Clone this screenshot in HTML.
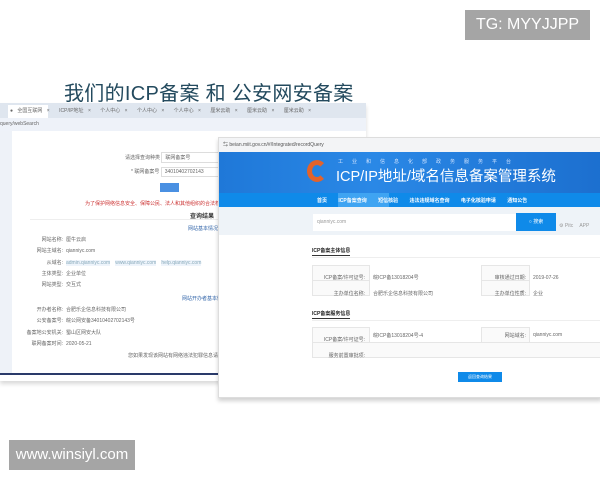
<!DOCTYPE html>
<html><head><meta charset="utf-8"><style>
*{margin:0;padding:0;box-sizing:border-box}
body{width:600px;height:480px;background:#fff;position:relative;overflow:hidden;font-family:"Liberation Sans","Noto Sans CJK SC",sans-serif}
.a{position:absolute}
.t{font-size:5px;color:#666;white-space:nowrap}
</style></head><body>
<div class="a" style="left:465px;top:10px;width:125px;height:30px;background:#a5a5a5;color:#fff;font-size:16px;line-height:30px;text-align:center">TG: MYYJJPP</div>
<div class="a" style="left:64px;top:77px;font-size:20px;color:#234a5e;white-space:nowrap;letter-spacing:0.3px">我们的ICP备案 和 公安网安备案</div>

<!-- left window -->
<div class="a" style="left:0;top:103px;width:366px;height:278px;background:#fff;box-shadow:0 3px 4px rgba(0,0,0,.15)">
 <div class="a" style="left:0;top:0;width:366px;height:15px;background:#dfe6ef"></div>
 <div class="a" style="left:8px;top:2px;width:40px;height:13px;background:#fff"></div>
 <div class="a t" style="left:10px;top:4px;word-spacing:3px">● 全国互联网 ×　 ICP/IP地址 ×　 个人中心 ×　 个人中心 ×　 个人中心 ×　 厘米云助 ×　 厘米云助 ×　 厘米云助 ×</div>
 <div class="a" style="left:0;top:15px;width:366px;height:13px;background:#eef2f9"></div>
 <div class="a t" style="left:0;top:18px">query/webSearch</div>
 <div class="a" style="left:0;top:28px;width:12px;height:242px;background:#eef2f8"></div>
 <div class="a t" style="left:125px;top:49px">请选择查询种类 <span style="display:inline-block;width:60px;border:1px solid #ddd;padding:1px 3px">联网备案号</span></div>
 <div class="a t" style="left:131px;top:64px">* 联网备案号 <span style="display:inline-block;width:60px;border:1px solid #ddd;padding:1px 3px">34010402702143</span></div>
 <div class="a" style="left:160px;top:80px;width:19px;height:9px;background:#4a90e2"></div>
 <div class="a t" style="left:85px;top:97px;color:#c33">为了保护网络信息安全、保障公民、法人和其他组织的合法权益，维护国家安全</div>
 <div class="a" style="left:30px;top:116px;width:336px;height:1px;background:#eee"></div>
 <div class="a" style="left:190px;top:108px;font-size:6px;color:#333;font-weight:bold">查询结果</div>
 <div class="a t" style="left:188px;top:122px;color:#3366aa">网站基本情况</div>
 <div class="a t" style="left:18px;top:132px;line-height:11.3px;text-align:right;width:45px">网站名称:<br>网站主域名:<br>从域名:<br>主体类型:<br>网站类型:</div>
 <div class="a t" style="left:66px;top:132px;line-height:11.3px">厘牛云启<br>qianniyc.com<br><span style="background:#eef4fb;color:#8ab">admin.qianniyc.com</span>　<span style="background:#eef4fb;color:#8ab">www.qianniyc.com</span>　<span style="background:#eef4fb;color:#8ab">help.qianniyc.com</span><br>企业单位<br>交互式</div>
 <div class="a t" style="left:182px;top:192px;color:#3366aa">网站开办者基本情况</div>
 <div class="a t" style="left:13px;top:202px;line-height:11.3px;text-align:right;width:50px">开办者名称:<br>公安备案号:<br>备案地公安机关:<br>联网备案时间:</div>
 <div class="a t" style="left:66px;top:202px;line-height:11.3px">合肥乐企信息科技有限公司<br>皖公网安备34010402702143号<br>蜀山区网安大队<br>2020-05-21</div>
 <div class="a t" style="left:128px;top:249px">您如果发现该网站有网络违法犯罪信息请及时报告</div>
 <div class="a" style="left:0;top:270px;width:366px;height:2px;background:#2a3a6a"></div>
</div>

<!-- right window -->
<div class="a" style="left:218px;top:137px;width:384px;height:261px;background:#fff;border:1px solid #ddd;box-shadow:0 3px 4px rgba(0,0,0,.18)">
 <div class="a" style="left:0;top:0;width:384px;height:14px;background:#f3f4f6"></div>
 <div class="a t" style="left:4px;top:3px;color:#555">⇆ beian.miit.gov.cn/#/Integrated/recordQuery</div>
 <div class="a" style="left:0;top:14px;width:384px;height:41px;background:linear-gradient(90deg,#1f78d8,#2a88e6 40%,#1c6fcf)"></div>
 <div class="a" style="left:88px;top:22px;width:20px;height:22px;border-radius:50%;border:5px solid #e2632c;border-right-color:transparent"></div>
 <div class="a" style="left:119px;top:20px;font-size:5px;color:#cfe3ff;letter-spacing:9px;white-space:nowrap">工业和信息化部政务服务平台</div>
 <div class="a" style="left:117px;top:27px;font-size:14.5px;color:#fff;white-space:nowrap">ICP/IP地址/域名信息备案管理系统</div>
 <div class="a" style="left:0;top:55px;width:384px;height:14px;background:#0f8ae9"></div>
 <div class="a" style="left:119px;top:55px;width:51px;height:14px;background:#3fa4f2"></div>
 <div class="a t" style="left:98px;top:59px;color:#fff;font-weight:bold">首页　　 ICP备案查询　　 短信核验　　 违法违规域名查询　　 电子化核验申请　　 通知公告</div>
 <div class="a" style="left:0;top:69px;width:384px;height:28px;background:#eef3f8"></div>
 <div class="a" style="left:94px;top:76px;width:204px;height:17px;background:#fff"></div>
 <div class="a t" style="left:98px;top:81px;color:#999">qianniyc.com</div>
 <div class="a" style="left:297px;top:75px;width:40px;height:18px;background:#0f8ae9;color:#fff;font-size:5px;text-align:center;line-height:18px">○ 搜索</div>
 <div class="a t" style="left:340px;top:84px;color:#999">⚙ Pitc　 APP</div>
 <div class="a" style="left:93px;top:109px;font-size:5px;font-weight:bold;color:#222">ICP备案主体信息</div>
 <div class="a" style="left:93px;top:117px;width:38px;height:1px;background:#333"></div>
 <div class="a" style="left:93px;top:119px;width:291px;height:1px;background:#eee"></div>
 <div class="a" style="left:93px;top:127px;width:291px;height:31px;border:1px solid #e6e6e6;background:#fafafa"></div>
 <div class="a" style="left:93px;top:142px;width:291px;height:1px;background:#e6e6e6"></div>
 <div class="a" style="left:150px;top:127px;width:113px;height:31px;background:#fff;border-left:1px solid #e6e6e6;border-right:1px solid #e6e6e6"></div>
 <div class="a" style="left:310px;top:127px;width:74px;height:31px;background:#fff;border-left:1px solid #e6e6e6"></div>
 <div class="a t" style="left:98px;top:132px;line-height:16px;text-align:right;width:48px">ICP备案/许可证号:<br>主办单位名称:</div>
 <div class="a t" style="left:154px;top:132px;line-height:16px">皖ICP备13018204号<br>合肥乐企信息科技有限公司</div>
 <div class="a t" style="left:265px;top:132px;line-height:16px;text-align:right;width:42px">审核通过日期:<br>主办单位性质:</div>
 <div class="a t" style="left:314px;top:132px;line-height:16px">2019-07-26<br>企业</div>
 <div class="a" style="left:93px;top:172px;font-size:5px;font-weight:bold;color:#222">ICP备案服务信息</div>
 <div class="a" style="left:93px;top:180px;width:38px;height:1px;background:#333"></div>
 <div class="a" style="left:93px;top:182px;width:291px;height:1px;background:#eee"></div>
 <div class="a" style="left:93px;top:189px;width:291px;height:31px;border:1px solid #e6e6e6;background:#fafafa"></div>
 <div class="a" style="left:93px;top:204px;width:291px;height:1px;background:#e6e6e6"></div>
 <div class="a" style="left:150px;top:189px;width:113px;height:15px;background:#fff;border-left:1px solid #e6e6e6;border-right:1px solid #e6e6e6"></div>
 <div class="a" style="left:310px;top:189px;width:74px;height:15px;background:#fff;border-left:1px solid #e6e6e6"></div>
 <div class="a t" style="left:98px;top:194px;line-height:16px;text-align:right;width:48px">ICP备案/许可证号:<br>服务前置审批项:</div>
 <div class="a t" style="left:154px;top:194px">皖ICP备13018204号-4</div>
 <div class="a t" style="left:265px;top:194px;text-align:right;width:42px">网站域名:</div>
 <div class="a t" style="left:314px;top:194px">qianniyc.com</div>
 <div class="a" style="left:239px;top:234px;width:44px;height:10px;background:#0f8ae9;color:#fff;font-size:4px;text-align:center;line-height:10px">返回查询结果</div>
</div>

<div class="a" style="left:9px;top:440px;width:126px;height:30px;background:#a5a5a5;color:#fff;font-size:15px;line-height:30px;text-align:center">www.winsiyl.com</div>
</body></html>
